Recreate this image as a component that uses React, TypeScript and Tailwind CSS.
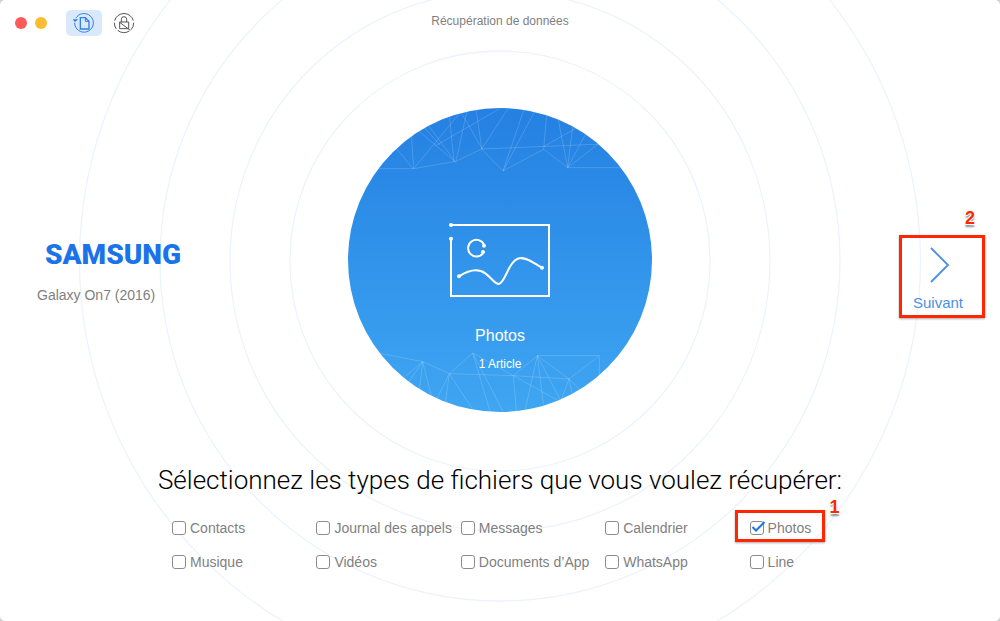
import { useState } from "react";

const fileTypes = [
  "Contacts",
  "Journal des appels",
  "Messages",
  "Calendrier",
  "Photos",
  "Musique",
  "Vidéos",
  "Documents d’App",
  "WhatsApp",
  "Line",
];

function RestoreIcon() {
  return (
    <svg viewBox="0 0 66 66" className="size-[22px]" fill="none" stroke="#2f80e8" strokeWidth="3" aria-hidden="true">
      <path d="M12 14A28 28 0 1 1 5 33" />
      <path d="M12 14Q5 22 5 31" strokeDasharray="5 3" />
      <path d="M1 22L7 27L13 22" strokeWidth="4" />
      <path d="M22 17H37L48 28V51H22Z" strokeWidth="4" />
      <path d="M37 17V28H48" />
    </svg>
  );
}

function LockIcon() {
  return (
    <svg viewBox="0 0 66 66" className="size-[22px]" fill="none" stroke="#555555" strokeWidth="3" aria-hidden="true">
      <path d="M5 26A29 29 0 0 1 61 26" />
      <path d="M62 32A29 29 0 0 1 54 53" />
      <path d="M49 57A29 29 0 0 1 14 55" />
      <path d="M10 51A29 29 0 0 1 4 32" />
      <path d="M20 30H47V50H20Z" />
      <path d="M25 30V22Q25 14 33 14T41 22V30" />
      <path d="M20 31L52 55" />
    </svg>
  );
}

function Rings() {
  return (
    <svg
      viewBox="-430 -430 860 860"
      className="pointer-events-none absolute top-1/2 left-1/2 size-[860px] max-w-none -translate-x-1/2 -translate-y-1/2"
      fill="none"
      stroke="#edf3fc"
      strokeWidth="1.3"
      aria-hidden="true"
    >
      <circle cy="1" r="210" />
      <circle cy="1" r="270" />
      <circle cy="1" r="340" />
      <circle cy="1" r="420.5" />
    </svg>
  );
}

function Mesh() {
  return (
    <svg
      viewBox="0 0 304 304"
      className="absolute inset-0 size-full"
      fill="none"
      stroke="#ffffff"
      strokeOpacity="0.17"
      strokeWidth="3"
      aria-hidden="true"
    >
      <g transform="translate(-8 -8) scale(0.33333)">
        <path d="M100 206H221L348 184L425 147L790 132" />
        <path d="M165 140L219 206M214 100L221 206L362 36M235 92L344 184M262 72L348 188M250 80L300 135M328 45L342 184M382 28L348 184" />
        <path d="M490 20L285 138M362 35L427 147M408 24L425 147L508 20M425 147L489 213L552 28M584 34L489 213L611 148" />
        <path d="M620 42L611 148L683 203M611 140L712 82M653 50L683 203L698 80M740 96L683 203L780 128M683 203H860" />
      </g>
      <g transform="translate(-8 222) scale(0.33333)">
        <path d="M100 66L248 95L328 131L520 137L687 147" />
        <path d="M248 95L185 148M248 95L203 160M248 95L238 184M248 95L274 198M328 131L398 69L520 137L592 77" />
        <path d="M328 131L288 212M328 131L316 220M328 131L402 244M398 69L452 250M398 69L492 250" />
        <path d="M520 137L530 250M520 137L666 218M592 77L554 246M592 77L612 238M592 77L664 216M592 77L687 147L778 77H592M778 77V140" />
        <path d="M687 147L660 218M687 147L698 198M687 147L728 186" />
      </g>
    </svg>
  );
}

function PhotoIcon() {
  return (
    <svg viewBox="54 36 312 234" className="relative h-[78px] w-[104px]" fill="none" stroke="#ffffff" strokeWidth="6" aria-hidden="true">
      <path d="M63 45H357V258H63V86" />
      <path d="M162 104A25 25 0 1 0 159 130" />
      <path d="M87 199C112 183 143 173 166 190C184 203 194 222 206 222C226 220 234 153 268 145C291 140 315 162 336 173" />
      <g fill="#ffffff" stroke="none">
        <circle cx="63" cy="45" r="6" />
        <circle cx="63" cy="86" r="6" />
        <circle cx="162" cy="107" r="6" />
        <circle cx="159" cy="126" r="6" />
        <circle cx="87" cy="199" r="6" />
        <circle cx="336" cy="173" r="6" />
      </g>
    </svg>
  );
}

function StepNumber({ value, className }: { value: number; className: string }) {
  return (
    <span
      className={`absolute text-lg leading-5 font-bold text-[#ff2600] [text-shadow:1px_0_#fff,-1px_0_#fff,0_1px_#fff,0_-1px_#fff,0_3px_2px_#888] ${className}`}
    >
      {value}
    </span>
  );
}

function FileTypeOption({ name, checked, onToggle }: { name: string; checked: boolean; onToggle: () => void }) {
  return (
    <label className="relative flex h-5 items-center gap-1 whitespace-nowrap">
      <span className="relative size-3.5">
        <input
          type="checkbox"
          checked={checked}
          onChange={onToggle}
          className="block size-3.5 appearance-none rounded-[3px] border border-[#8c8c8c] bg-white"
        />
        {checked && (
          <svg viewBox="0 0 14 14" className="pointer-events-none absolute inset-0 size-3.5 overflow-visible" fill="none" stroke="#1b78e6" strokeWidth="2" aria-hidden="true">
            <path d="M2.5 6L6 9.5L14.5 1" />
          </svg>
        )}
      </span>
      {name}
      {name === "Photos" && (
        <>
          <span className="pointer-events-none absolute -top-2 -bottom-1 -left-[15px] w-[90px] border-3 border-[#ff2600] shadow-[0_1px_2px_#aaa]" />
          <StepNumber value={1} className="-top-[21px] left-20" />
        </>
      )}
    </label>
  );
}

export default function App() {
  const [selected, setSelected] = useState<string[]>(["Photos"]);

  const toggle = (name: string) =>
    setSelected((current) => (current.includes(name) ? current.filter((n) => n !== name) : [...current, name]));

  return (
    <div className="min-h-screen bg-[#cfcfcf] font-['Liberation_Sans',Arial,sans-serif] text-[#7f7f7f]">
      <div className="relative isolate flex min-h-screen flex-col overflow-hidden rounded-[5px] bg-white">
        <header className="relative z-10 grid grid-cols-[1fr_auto_1fr] items-start pt-2.5">
          <div className="flex items-center pl-[15px]">
            <button type="button" aria-label="Fermer" className="size-3 rounded-full bg-[#fc5b57]" />
            <button type="button" aria-label="Réduire" className="ml-2 size-3 rounded-full bg-[#fdbc2f]" />
            <button type="button" aria-label="Récupération" className="ml-[19px] flex h-[26px] w-9 items-center justify-center rounded-[5px] bg-[#dae8fc]">
              <RestoreIcon />
            </button>
            <button type="button" aria-label="Déverrouillage" className="ml-[11px] flex size-[22px] items-center justify-center">
              <LockIcon />
            </button>
          </div>
          <h1 className="text-xs leading-[22px]">Récupération de données</h1>
        </header>

        <main className="mt-[72px] flex flex-col">
          <div className="grid grid-cols-[1fr_304px_1fr] items-center">
            <section className="relative z-10 mt-6 pl-[37px]">
              <div className="pl-2 font-['Roboto',sans-serif] text-[28px] leading-8 font-black text-[#1a73e8]">SAMSUNG</div>
              <p className="mt-3.5 text-sm leading-5">Galaxy On7 (2016)</p>
            </section>

            <section className="relative">
              <Rings />
              <div className="relative flex h-[304px] flex-col items-center overflow-hidden rounded-full bg-linear-to-b from-[#2480e2] to-[#3fa6f2] pt-[114px] text-white">
                <Mesh />
                <PhotoIcon />
                <h2 className="relative mt-[26px] text-base leading-5">Photos</h2>
                <p className="relative mt-2 text-xs leading-5">1 Article</p>
              </div>
            </section>

            <div className="relative z-10 mt-[33px] mr-[15px] justify-self-end">
              <button
                type="button"
                className="flex h-[83px] w-[86px] flex-col items-center border-3 border-[#ff2600] pt-[9px] pr-2 text-[15px] leading-5 text-[#4a90e2] shadow-[0_1px_2px_#aaa]"
              >
                <svg viewBox="0 0 20 36" className="ml-1 h-9 w-5" fill="none" stroke="#4a90e2" strokeWidth="1.8" aria-hidden="true">
                  <path d="M1 1L18 18L1 35" />
                </svg>
                <span className="mt-2.5">Suivant</span>
              </button>
              <StepNumber value={2} className="-top-[27px] right-2.5" />
            </div>
          </div>

          <fieldset className="relative z-10 mt-[52px] flex flex-col items-center">
            <legend className="mx-auto px-4 text-center font-['Roboto','Liberation_Sans',sans-serif] text-[26px] leading-8 font-light text-black">
              Sélectionnez les types de fichiers que vous voulez récupérer:
            </legend>
            <div className="mt-[22px] ml-[66px] grid w-full max-w-[722px] grid-cols-5 gap-y-3.5 text-sm">
              {fileTypes.map((name) => (
                <FileTypeOption key={name} name={name} checked={selected.includes(name)} onToggle={() => toggle(name)} />
              ))}
            </div>
          </fieldset>
        </main>
      </div>
    </div>
  );
}
